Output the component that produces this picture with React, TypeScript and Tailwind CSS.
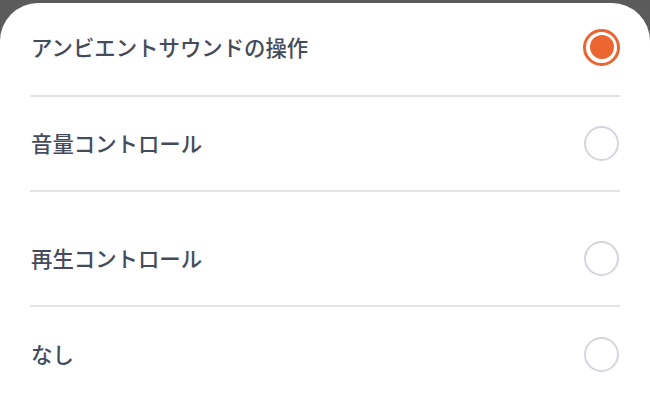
export default function App() {
  const options = [
    { label: "アンビエントサウンドの操作", selected: true, h: "h-[92px] pb-[4px]" },
    { label: "音量コントロール", selected: false, h: "h-[93px]" },
    { label: "再生コントロール", selected: false, h: "h-[113px] pt-[20px]" },
    { label: "なし", selected: false, h: "h-[94px]" },
  ];

  return (
    <div className="h-[400px] w-[650px] overflow-hidden bg-[#5b5b5b] pt-[3px]">
      <div
        className="h-full rounded-t-[38px] bg-white px-[30px]"
        style={{ fontFamily: '"Noto Sans CJK JP", "Noto Sans", sans-serif' }}
      >
        {options.map((o, i) => (
          <div key={o.label}>
            {i > 0 && <div className="h-[2px] bg-[#e3e4e8]" />}
            <div className={`flex items-center justify-between ${o.h}`}>
              <span className="pl-px text-[21.4px] font-medium text-[#444c5c]">{o.label}</span>
              {o.selected ? (
                <span className="flex h-[37px] w-[37px] items-center justify-center rounded-full border-[3px] border-[#ea6530]">
                  <span className="h-[24px] w-[24px] rounded-full bg-[#ea6530]" />
                </span>
              ) : (
                <span className="mr-px h-[35px] w-[35px] rounded-full border-2 border-[#d3d6de]" />
              )}
            </div>
          </div>
        ))}
      </div>
    </div>
  );
}
